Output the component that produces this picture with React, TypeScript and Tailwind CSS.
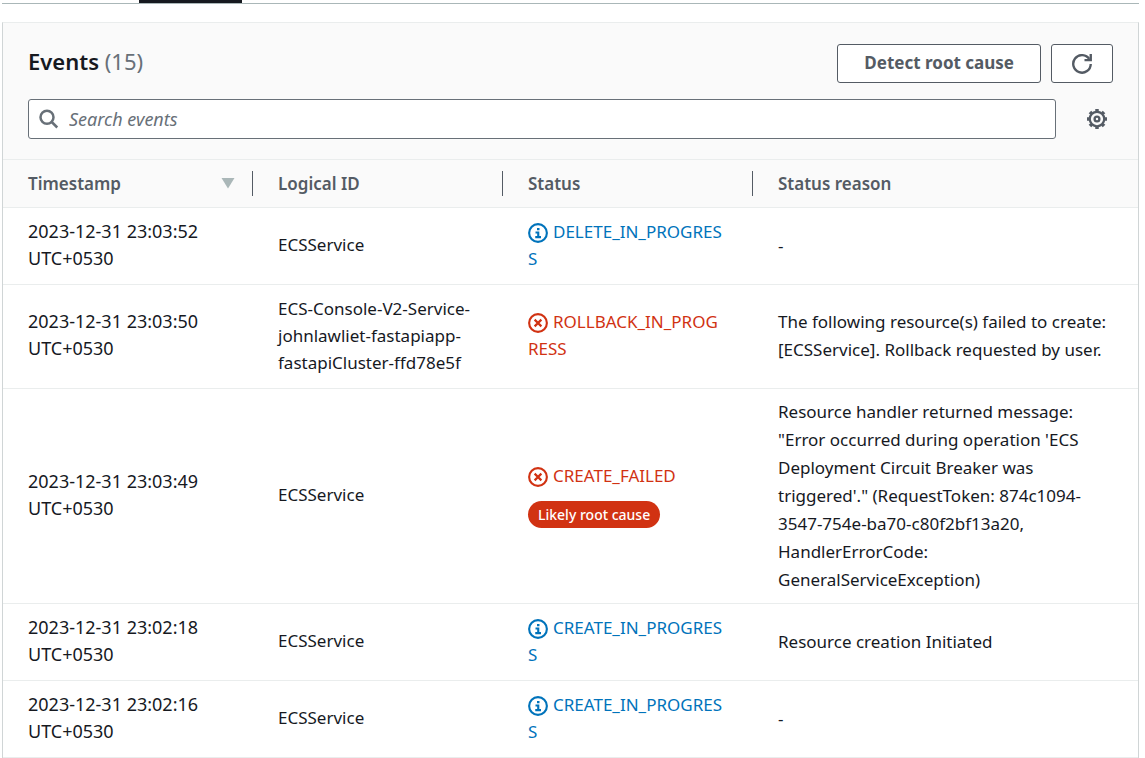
import React from "react";

type Kind = "info" | "error";

const events = [
  { date: "2023-12-31 23:03:52", id: "ECSService", kind: "info" as Kind, status: "DELETE_IN_PROGRESS", reason: "-" },
  {
    date: "2023-12-31 23:03:50",
    id: "ECS-Console-V2-Service-johnlawliet-fastapiapp-fastapiCluster-ffd78e5f",
    kind: "error" as Kind,
    status: "ROLLBACK_IN_PROGRESS",
    reason: "The following resource(s) failed to create: [ECSService]. Rollback requested by user.",
  },
  {
    date: "2023-12-31 23:03:49",
    id: "ECSService",
    kind: "error" as Kind,
    status: "CREATE_FAILED",
    rootCause: true,
    reason:
      "Resource handler returned message: \"Error occurred during operation 'ECS Deployment Circuit Breaker was triggered'.\" (RequestToken: 874c1094-3547-754e-ba70-c80f2bf13a20, HandlerErrorCode: GeneralServiceException)",
  },
  { date: "2023-12-31 23:02:18", id: "ECSService", kind: "info" as Kind, status: "CREATE_IN_PROGRESS", reason: "Resource creation Initiated" },
  { date: "2023-12-31 23:02:16", id: "ECSService", kind: "info" as Kind, status: "CREATE_IN_PROGRESS", reason: "-" },
];

const StatusIcon = ({ kind }: { kind: Kind }) => (
  <svg viewBox="0 0 16 16" className="inline-block w-5 h-5 mr-[5px]" fill="none" stroke="currentColor" strokeWidth="1.7" aria-hidden="true">
    <circle cx="8" cy="8" r="7.1" />
    {kind === "info" ? (
      <path d="M6 7.6h2.2v3.6M5.8 11.3h4.6M7.2 4.9h2" />
    ) : (
      <path d="M5.3 5.3l5.4 5.4M10.7 5.3l-5.4 5.4" />
    )}
  </svg>
);

const teeth = [0, 45, 90, 135, 180, 225, 270, 315];

const GearIcon = () => (
  <svg viewBox="0 0 16 16" className="w-5 h-5" fill="none" stroke="currentColor" aria-hidden="true">
    <circle cx="8" cy="8" r="5.8" strokeWidth="1.8" />
    <circle cx="8" cy="8" r="1.9" strokeWidth="1.9" />
    {teeth.map((a) => (
      <path key={a} d="M6.6 0.9h2.8" strokeWidth="1.8" transform={`rotate(${a} 8 8)`} />
    ))}
  </svg>
);

const App = () => {
  return (
    <div className="min-h-screen bg-white pl-[2px] pr-[6px] font-['Noto_Sans',sans-serif] text-[17px] text-[#16191f]">
      {/* Tab strip */}
      <div className="h-1 border-b border-[#aab7b8]">
        <div className="ml-[137px] w-[103px] h-[3px] bg-[#16191f]" />
      </div>

      <section className="mt-[18px] border border-t-[#eaeded] border-x-[#d0d5d6] border-b-0">
        <div className="bg-[#fafafa] border-b border-[#eaeded] px-[25px] pt-[21px] pb-5">
          <div className="flex items-start justify-between">
            <h2 className="text-[22px] leading-[35px] font-semibold">
              Events <span className="font-normal text-[#687078]">(15)</span>
            </h2>
            <div className="flex gap-[10px] text-[#545b64]">
              <button className="h-[39px] px-[26px] pb-px border border-[#545b64] rounded-[3px] bg-white font-bold">
                Detect root cause
              </button>
              <button aria-label="Refresh" className="flex items-center justify-center w-[62px] h-[39px] border border-[#545b64] rounded-[3px] bg-white">
                <svg viewBox="0 0 16 16" className="w-5 h-5" fill="none" stroke="currentColor" strokeWidth="1.9" aria-hidden="true">
                  <path d="M15 8a7 7 0 1 1-1.2-4" />
                  <path d="M10 4.9h5V0" />
                </svg>
              </button>
            </div>
          </div>
          <div className="flex items-center mt-4">
            <label className="flex flex-1 items-center h-10 px-[10px] border border-[#687078] rounded-[3px] bg-white">
              <svg viewBox="0 0 16 16" className="w-5 h-5 text-[#687078]" fill="none" stroke="currentColor" strokeWidth="2" aria-hidden="true">
                <circle cx="6.4" cy="6.6" r="5.2" />
                <path d="M10.2 10.4l4.4 4.4" />
              </svg>
              <input
                type="search"
                aria-label="Search events"
                placeholder="Search events"
                className="flex-1 ml-[10px] text-[18px] outline-none placeholder:italic placeholder:text-[#687078]"
              />
            </label>
            <button aria-label="Preferences" className="ml-[31px] mr-[6px] text-[#545b64]">
              <GearIcon />
            </button>
          </div>
        </div>

        <table className="w-full table-fixed border-collapse text-left">
          <thead className="bg-[#fafafa] text-[#545b64]">
            <tr className="h-[47px] border-b border-[#eaeded]">
              <th className="w-[250px] p-0">
                <button className="flex items-center justify-between w-full h-[25px] pl-[25px] pr-[17px] border-r border-[#545b64] font-semibold">
                  Timestamp
                  <svg viewBox="0 0 14 12" className="w-[14px] h-3 text-[#aab7b8]" fill="currentColor" aria-hidden="true">
                    <path d="M0.5 1h13L7 11.5z" />
                  </svg>
                </button>
              </th>
              <th className="w-[250px] p-0">
                <div className="h-[25px] leading-[25px] pl-[25px] border-r border-[#545b64] font-semibold">Logical ID</div>
              </th>
              <th className="w-[250px] p-0">
                <div className="h-[25px] leading-[25px] pl-[25px] border-r border-[#545b64] font-semibold">Status</div>
              </th>
              <th className="py-0 px-[25px] font-semibold">Status reason</th>
            </tr>
          </thead>
          <tbody>
            {events.map((e) => (
              <tr key={e.date} className="border-b border-[#eaeded] leading-[27px]">
                <td className="px-[25px] pt-[10px] pb-3 text-[18px]">
                  {e.date}
                  <br />
                  UTC+0530
                </td>
                <td className="px-[25px] pt-[10px] pb-3">{e.id}</td>
                <td className={e.kind === "info" ? "px-[25px] pt-[10px] pb-3 text-[#0073bb]" : "px-[25px] pt-[10px] pb-3 text-[#d13212]"}>
                  <div className="break-all">
                    <StatusIcon kind={e.kind} />
                    {e.status}
                  </div>
                  {e.rootCause && (
                    <span className="inline-block mt-3 px-[10px] rounded-full bg-[#d13212] text-[14px] font-medium text-white">
                      Likely root cause
                    </span>
                  )}
                </td>
                <td className="px-[25px] py-[9px] leading-7">{e.reason}</td>
              </tr>
            ))}
          </tbody>
        </table>
      </section>
    </div>
  );
};

export default App;
